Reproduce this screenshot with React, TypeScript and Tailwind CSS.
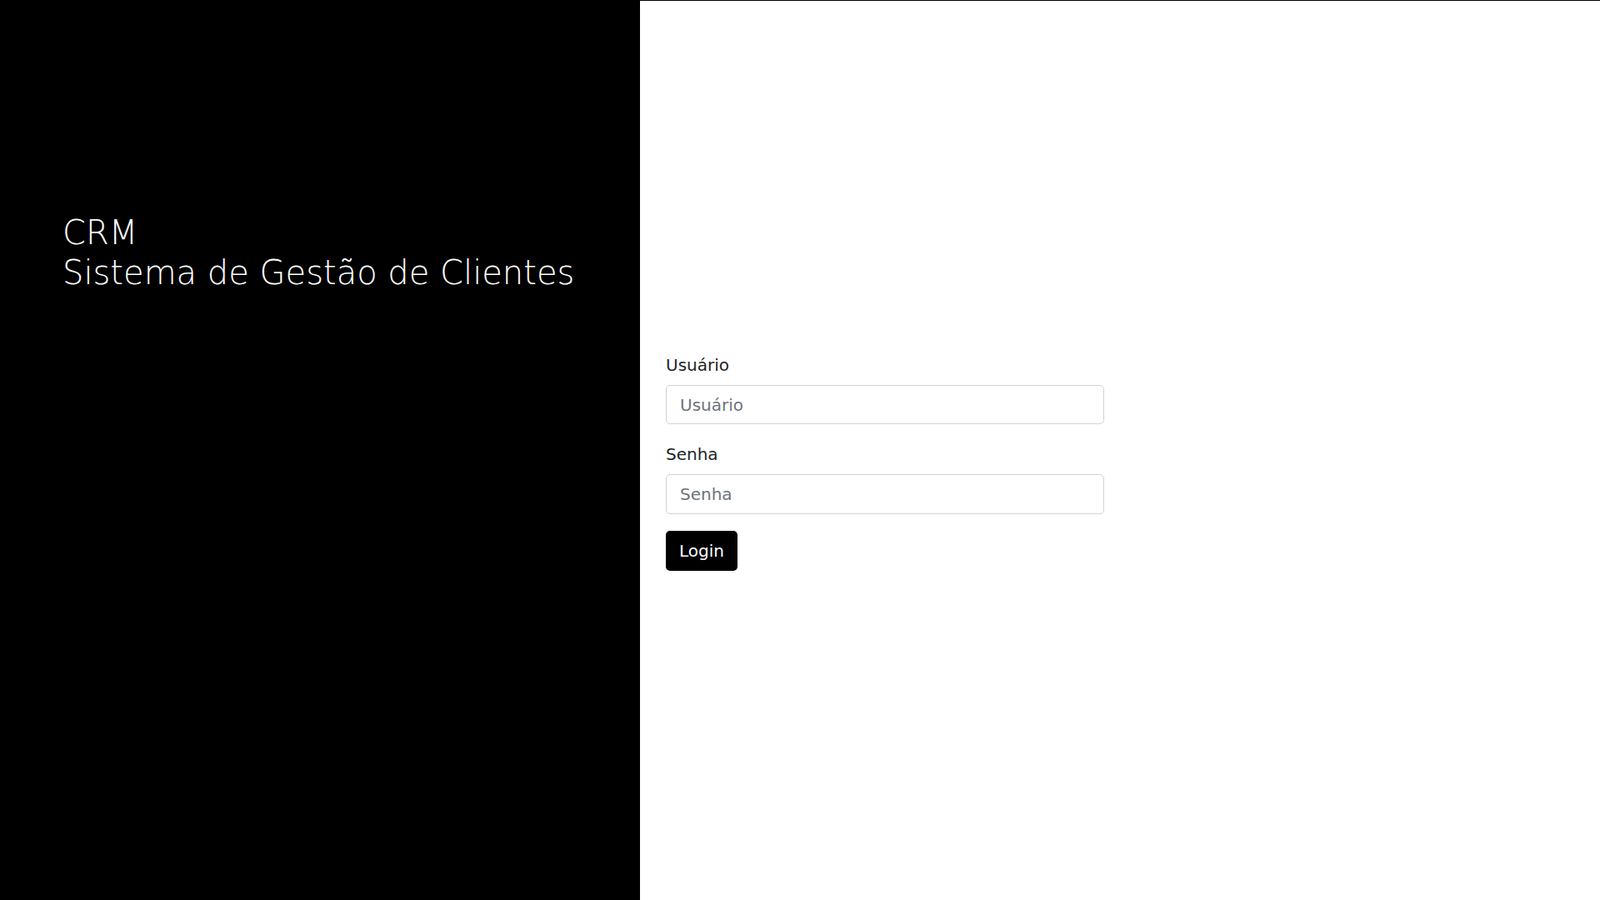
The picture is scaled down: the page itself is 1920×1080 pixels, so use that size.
import React, { useState } from 'react';

const App: React.FC = () => {
  const [usuario, setUsuario] = useState('');
  const [senha, setSenha] = useState('');

  return (
    <div className="flex h-[1080px] w-full font-['DejaVu_Sans',sans-serif]">
      <div className="w-[768px] shrink-0 bg-black pt-[255px] pl-[75px]">
        <h1 className="text-[40px] leading-[48px] font-extralight text-white">
          CRM
          <br />
          Sistema de Gestão de Clientes
        </h1>
      </div>

      <div className="flex-1 border-t border-black bg-white pt-[422px] pl-[31px]">
        <form className="w-[526px]" onSubmit={e => e.preventDefault()}>
          <label htmlFor="usuario" className="block mb-[9px] text-[20px] leading-[30px] text-[#212529]">
            Usuário
          </label>
          <input
            id="usuario"
            type="text"
            placeholder="Usuário"
            value={usuario}
            onChange={e => setUsuario(e.target.value)}
            className="block h-[47px] w-full rounded-[5px] border border-[#ced4da] px-4 text-[20px] text-[#212529] placeholder:text-[#6c757d] outline-none"
          />

          <label htmlFor="senha" className="block mt-[21px] mb-[9px] text-[20px] leading-[30px] text-[#212529]">
            Senha
          </label>
          <input
            id="senha"
            type="password"
            placeholder="Senha"
            value={senha}
            onChange={e => setSenha(e.target.value)}
            className="block h-[48px] w-full rounded-[5px] border border-[#ced4da] px-4 text-[20px] text-[#212529] placeholder:text-[#6c757d] outline-none"
          />

          <button
            type="submit"
            className="mt-[20px] h-[48px] rounded-[5px] bg-black px-4 text-[20px] leading-[30px] text-white"
          >
            Login
          </button>
        </form>
      </div>
    </div>
  );
};

export default App;
